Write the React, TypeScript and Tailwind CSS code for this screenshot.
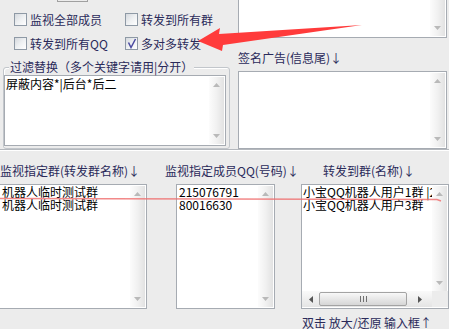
import React from "react";

const Tri = ({ dir, color = "#b9b9b9" }: { dir: "up" | "down" | "left" | "right"; color?: string }) => {
  const pts =
    dir === "up"
      ? "0,4 7,4 3.5,0"
      : dir === "down"
      ? "0,0 7,0 3.5,4"
      : dir === "left"
      ? "4,0 4,7 0,3.5"
      : "0,0 0,7 4,3.5";
  const w = dir === "up" || dir === "down" ? 7 : 4;
  const h = dir === "up" || dir === "down" ? 4 : 7;
  return (
    <svg width={w} height={h} viewBox={`0 0 ${w} ${h}`} className="block">
      <polygon points={pts} fill={color} />
    </svg>
  );
};

const VScroll = ({ showUp = true, showDown = true }: { showUp?: boolean; showDown?: boolean }) => (
  <div className="w-[15px] h-full flex flex-col justify-between items-center bg-gradient-to-r from-[#fcfcfc] via-[#f1f1f1] to-[#e2e2e2] py-[6px]">
    <div className={showUp ? "" : "invisible"}>
      <Tri dir="up" />
    </div>
    <div className={showDown ? "" : "invisible"}>
      <Tri dir="down" />
    </div>
  </div>
);

const Checkbox = ({ checked, label }: { checked?: boolean; label: string }) => (
  <div className="flex items-center">
    <div className="w-[13px] h-[13px] border border-[#8e99a5] bg-gradient-to-br from-[#d5d9de] via-[#eef0f2] to-white flex items-center justify-center">
      {checked && (
        <svg width="11" height="11" viewBox="0 0 11 11" className="block">
          <path d="M2.5 4.5 L5 9.5 L9.5 1" stroke="#4a4aa0" strokeWidth="1.5" fill="none" />
        </svg>
      )}
    </div>
    <span className="ml-[3px] text-[#2a2a5a]">{label}</span>
  </div>
);

export default function App() {
  return (
    <div className="relative w-[449px] h-[329px] overflow-hidden bg-[#ececec] text-[12px] leading-[12px] font-['Noto_Sans_CJK_SC','Noto_Sans',sans-serif] text-black">
      {/* top section */}
      <div className="flex h-[149px]">
        {/* left column */}
        <div className="w-[238px] flex flex-col">
          <div className="ml-[57px] w-[31px] h-[2px] border-x border-b border-[#a0a0a0]" />
          <div className="mt-[11px] pl-[14px] flex">
            <div className="w-[111px]">
              <Checkbox label="监视全部成员" />
            </div>
            <Checkbox label="转发到所有群" />
          </div>
          <div className="mt-[11px] pl-[14px] flex">
            <div className="w-[111px]">
              <Checkbox label="转发到所有QQ" />
            </div>
            <Checkbox checked label="多对多转发" />
          </div>
          {/* group box */}
          <div className="mt-[11px] ml-[3px] w-[227px] flex flex-col">
            <div className="h-[12px] pl-[6px] relative z-10 flex">
              <span className="bg-[#ececec] px-[1px] text-[#2a2a5a]">过滤替换（多个关键字请用|分开）</span>
            </div>
            <div className="-mt-[6px] h-[82px] border border-[#c2c6cb] rounded-[3px] shadow-[inset_1px_1px_0_#ffffff] pt-[7px]">
              <div className="w-[222px] h-[71px] border border-[#a6abb2] bg-white flex">
                <div className="flex-1 pl-[1px] pt-[1px] leading-[14px] whitespace-nowrap overflow-hidden">屏蔽内容*|后台*后二</div>
                <div className="py-[1px] pr-[1px] h-full">
                  <VScroll />
                </div>
              </div>
            </div>
          </div>
        </div>
        {/* right column */}
        <div className="w-[209px] flex flex-col">
          <div className="h-[38px] border-x border-b border-[#a6abb2] bg-white flex justify-end">
            <div className="pb-[1px] pr-[1px] h-full">
              <VScroll showUp={false} />
            </div>
          </div>
          <div className="mt-[13px] h-[14px] leading-[14px] text-[#2a2a5a] whitespace-nowrap">签名广告(信息尾)↓</div>
          <div className="mt-[6px] h-[78px] border border-[#a6abb2] bg-white flex justify-end">
            <div className="py-[1px] pr-[1px] h-full">
              <VScroll />
            </div>
          </div>
        </div>
      </div>
      {/* separator */}
      <div className="h-[1px] bg-[#b4b8bd]" />
      <div className="h-[1px] bg-white" />

      {/* bottom labels */}
      <div className="mt-[13px] h-[14px] leading-[14px] flex text-[#2a2a5a] whitespace-nowrap">
        <div className="w-[165px]">监视指定群(转发群名称)↓</div>
        <div className="w-[158px]">监视指定成员QQ(号码)↓</div>
        <div>转发到群(名称)↓</div>
      </div>

      {/* list boxes */}
      <div className="mt-[6px] flex h-[125px]">
        <div className="-ml-[1px] w-[148px] h-full border border-[#a6abb2] bg-white flex">
          <div className="flex-1 pl-[2px] leading-[13px] whitespace-nowrap overflow-hidden">
            <div>机器人临时测试群</div>
            <div>机器人临时测试群</div>
          </div>
          <div className="py-[1px] pr-[1px] h-full">
            <VScroll />
          </div>
        </div>
        <div className="ml-[29px] w-[99px] h-full border border-[#a6abb2] bg-white flex">
          <div className="flex-1 pl-[2px] leading-[13px] whitespace-nowrap overflow-hidden">
            <div>215076791</div>
            <div>80016630</div>
          </div>
          <div className="py-[1px] pr-[1px] h-full">
            <VScroll />
          </div>
        </div>
        <div className="ml-[26px] w-[148px] h-full border border-[#a6abb2] bg-white flex flex-col">
          <div className="flex flex-1 min-h-0">
            <div className="flex-1 pl-[1px] leading-[13px] whitespace-nowrap overflow-hidden">
              <div>小宝QQ机器人用户1群 |2:</div>
              <div>小宝QQ机器人用户3群</div>
            </div>
            <div className="pt-[1px] pr-[1px] h-full">
              <VScroll />
            </div>
          </div>
          <div className="h-[16px] mb-[1px] flex">
            <div className="flex-1 flex items-center bg-gradient-to-b from-[#fafafa] to-[#e4e4e4]">
              <div className="w-[17px] flex justify-center">
                <Tri dir="left" color="#555555" />
              </div>
              <div className="w-[88px] h-[14px] border border-[#a3a3a3] rounded-[2px] bg-gradient-to-b from-[#f8f8f8] to-[#d6d6d6] flex items-center justify-center gap-[2px]">
                <div className="w-[1px] h-[6px] bg-[#707070]" />
                <div className="w-[1px] h-[6px] bg-[#707070]" />
                <div className="w-[1px] h-[6px] bg-[#707070]" />
              </div>
              <div className="flex-1 flex justify-center">
                <Tri dir="right" color="#555555" />
              </div>
            </div>
            <div className="w-[16px] bg-[#ececec]" />
          </div>
        </div>
      </div>

      {/* bottom text */}
      <div className="mt-[7px] ml-[302px] leading-[14px] text-[#2a2a5a] whitespace-nowrap">双击 放大/还原 输入框↑</div>

      {/* annotations overlay */}
      <svg className="absolute inset-0 pointer-events-none" width="449" height="329" viewBox="0 0 449 329">
        <polygon points="198,41 220,28 219,34 362,25 223,45 222,51" fill="#ff3b3b" />
        <polyline points="0,198.5 437,199.5 441,201" stroke="#ef6b6b" strokeOpacity="0.8" strokeWidth="1.6" fill="none" />
      </svg>
    </div>
  );
}
